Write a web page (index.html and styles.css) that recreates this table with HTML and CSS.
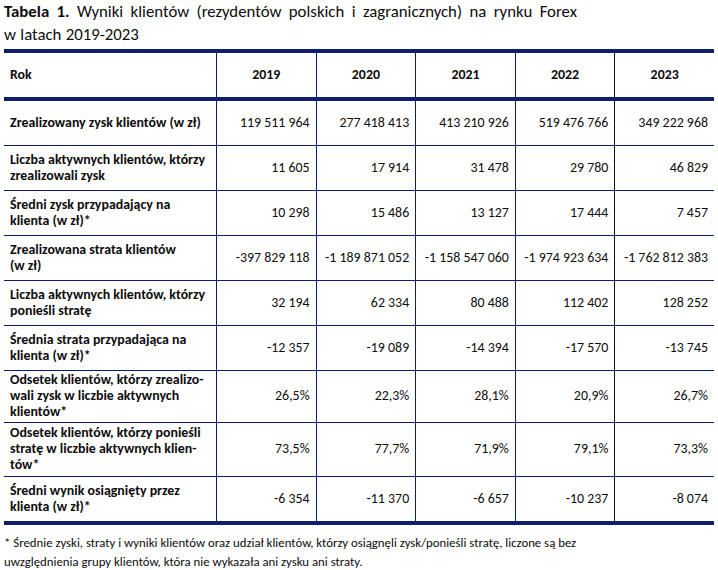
FILE: index.html
```html
<!DOCTYPE html>
<html lang="pl">
<head>
<meta charset="utf-8">
<title>Tabela 1</title>
<link rel="stylesheet" href="styles.css">
</head>
<body>
<div class="page">
  <p class="caption"><b>Tabela 1.</b> Wyniki klientów (rezydentów polskich i zagranicznych) na rynku Forex<br><span class="caption-tail">w latach 2019-2023</span></p>
  <table class="data">
    <colgroup>
      <col class="c-label"><col class="c-year"><col class="c-year"><col class="c-year"><col class="c-year"><col class="c-year">
    </colgroup>
    <thead>
      <tr>
        <th class="label">Rok</th>
        <th>2019</th><th>2020</th><th>2021</th><th>2022</th><th class="last">2023</th>
      </tr>
    </thead>
    <tbody>
      <tr>
        <td class="label">Zrealizowany zysk klientów (w zł)</td>
        <td>119 511 964</td><td>277 418 413</td><td>413 210 926</td><td>519 476 766</td><td class="last">349 222 968</td>
      </tr>
      <tr>
        <td class="label">Liczba aktywnych klientów, którzy<br>zrealizowali zysk</td>
        <td>11 605</td><td>17 914</td><td>31 478</td><td>29 780</td><td class="last">46 829</td>
      </tr>
      <tr>
        <td class="label">Średni zysk przypadający na<br>klienta (w zł)*</td>
        <td>10 298</td><td>15 486</td><td>13 127</td><td>17 444</td><td class="last">7 457</td>
      </tr>
      <tr>
        <td class="label">Zrealizowana strata klientów<br>(w zł)</td>
        <td>-397 829 118</td><td>-1 189 871 052</td><td>-1 158 547 060</td><td>-1 974 923 634</td><td class="last">-1 762 812 383</td>
      </tr>
      <tr>
        <td class="label">Liczba aktywnych klientów, którzy<br>ponieśli stratę</td>
        <td>32 194</td><td>62 334</td><td>80 488</td><td>112 402</td><td class="last">128 252</td>
      </tr>
      <tr>
        <td class="label">Średnia strata przypadająca na<br>klienta (w zł)*</td>
        <td>-12 357</td><td>-19 089</td><td>-14 394</td><td>-17 570</td><td class="last">-13 745</td>
      </tr>
      <tr>
        <td class="label">Odsetek klientów, którzy zrealizo-<br>wali zysk w liczbie aktywnych<br>klientów*</td>
        <td>26,5%</td><td>22,3%</td><td>28,1%</td><td>20,9%</td><td class="last">26,7%</td>
      </tr>
      <tr class="tall">
        <td class="label">Odsetek klientów, którzy ponieśli<br>stratę w liczbie aktywnych klien-<br>tów*</td>
        <td>73,5%</td><td>77,7%</td><td>71,9%</td><td>79,1%</td><td class="last">73,3%</td>
      </tr>
      <tr class="final">
        <td class="label">Średni wynik osiągnięty przez<br>klienta (w zł)*</td>
        <td>-6 354</td><td>-11 370</td><td>-6 657</td><td>-10 237</td><td class="last">-8 074</td>
      </tr>
    </tbody>
  </table>
  <p class="note">* Średnie zyski, straty i wyniki klientów oraz udział klientów, którzy osiągnęli zysk/ponieśli stratę, liczone są bez<br>uwzględnienia grupy klientów, która nie wykazała ani zysku ani straty.</p>
</div>
</body>
</html>
```

FILE: styles.css
```css
html, body {
  margin: 0;
  padding: 0;
  background: #ffffff;
}
body {
  font-family: Carlito, Calibri, Lato, "Liberation Sans", sans-serif;
  color: #0d0d0d;
}
.page {
  padding: 0 4px;
  width: 710px;
}
.caption {
  margin: 0;
  font-size: 16.8px;
  line-height: 23px;
  word-spacing: 3.6px;
}
.caption b {
  font-weight: 700;
}
.caption-tail {
  word-spacing: 0.5px;
}
.data {
  margin-top: 3px;
  width: 710px;
  border-collapse: separate;
  border-spacing: 0;
  table-layout: fixed;
  font-size: 13.9px;
  line-height: 16px;
  border-top: 4px solid #0c1f6e;
  border-bottom: 4px solid #0c1f6e;
}
.c-label { width: 212px; }
.c-year { width: 99.6px; }
.data th, .data td {
  padding: 1px 6px 2px 6px;
  height: 41px;
  vertical-align: middle;
  border-bottom: 1px solid #0c1f6e;
  border-left: 1px solid #0c1f6e;
  text-align: right;
  white-space: nowrap;
}
.data th {
  height: 41px;
  text-align: center;
  font-weight: 700;
  border-bottom: 4px solid #0c1f6e;
}
.data .label {
  border-left: none;
  text-align: left;
  font-weight: 700;
}
.data .last {
  border-left-color: #111111;
}
.data tr.tall td {
  padding-top: 2px;
  padding-bottom: 3px;
}
.data tr.final td {
  border-bottom: none;
}
.note {
  margin: 8px 0 0 0;
  font-size: 12.8px;
  line-height: 19px;
}
```
